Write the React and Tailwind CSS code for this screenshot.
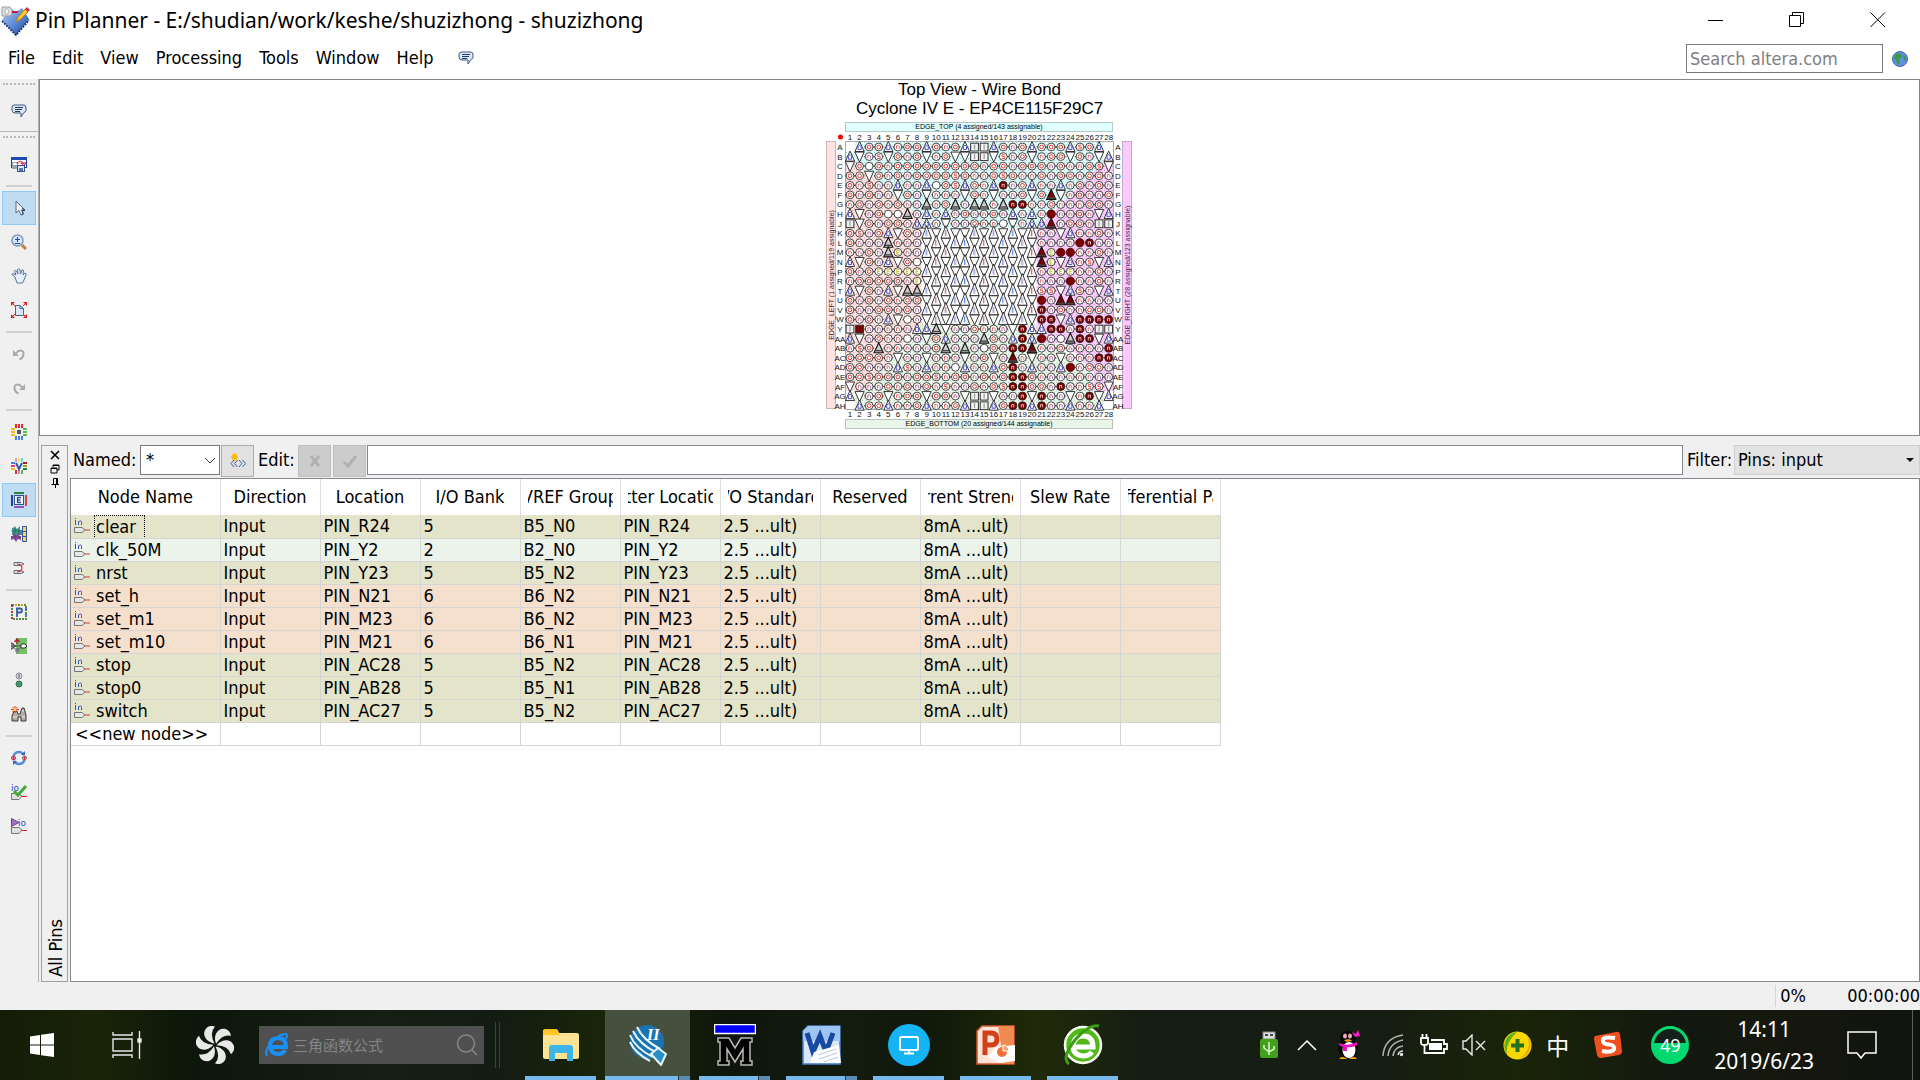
import React from "react";

const menuItems = ["File", "Edit", "View", "Processing", "Tools", "Window", "Help"];

const columns = [
  "Node Name",
  "Direction",
  "Location",
  "I/O Bank",
  "VREF Group",
  "Fitter Location",
  "I/O Standard",
  "Reserved",
  "Current Strength",
  "Slew Rate",
  "Differential Pair",
];

const pins = [
  { name: "clear", location: "PIN_R24", bank: "5", vref: "B5_N0" },
  { name: "clk_50M", location: "PIN_Y2", bank: "2", vref: "B2_N0" },
  { name: "nrst", location: "PIN_Y23", bank: "5", vref: "B5_N2" },
  { name: "set_h", location: "PIN_N21", bank: "6", vref: "B6_N2" },
  { name: "set_m1", location: "PIN_M23", bank: "6", vref: "B6_N2" },
  { name: "set_m10", location: "PIN_M21", bank: "6", vref: "B6_N1" },
  { name: "stop", location: "PIN_AC28", bank: "5", vref: "B5_N2" },
  { name: "stop0", location: "PIN_AB28", bank: "5", vref: "B5_N1" },
  { name: "switch", location: "PIN_AC27", bank: "5", vref: "B5_N2" },
];

const bankColors = {
  2: "bg-[#ebf3eb]",
  5: "bg-[#e4e4ca]",
  6: "bg-[#f5dfcd]",
};

// o/n/s/y: user I/O, d/B: assigned, ^/v: power and ground, A/D: clocks, #/S: config
const packageRows = [
  ["A", "-^oo ^noo ^ono ^##^ ono^ ooo^ so^-"],
  ["B", "^vns vono vnov v##v snov noov onv^"],
  ["C", "vo.o nooo oooo oono onoo onon nosv"],
  ["D", "oovo nono ooos onno sonn onoo noon"],
  ["E", "onsn n^nn ^.os ^on^ dno^ nn^n onon"],
  ["F", "onon nvon vnnn vonv nnov oDvn onno"],
  ["G", "nono nonn AnoA nAAn Addn nonn noon"],
  ["H", "^vno ..An ^n^n onno n^n^ nBnn onv^"],
  ["J", "#von oon^ ^nvn nonn .vn^ ^Dno on##"],
  ["K", "osno ^von ivil vivi vivi nnv^ nnon"],
  ["L", "onnn Annn vivi iviv iviv nnnn Bdnn"],
  ["M", "nnon Aynn iviv vivi vivi DyBB nnon"],
  ["N", "^von ^vo. vivi iviv iviv Dyv^ nsv^"],
  ["P", "onoy yyyy iviv vivi vivi nyyy nnon"],
  ["R", "nooo oony vivi iviv iviv nnnB nnon"],
  ["T", "^von ^vAA iviv vivi vivi ssv^ snv^"],
  ["U", "onon onoo vivi iviv iviv BnDD nnnn"],
  ["V", "onno onon iviv vivi vivi dnon noon"],
  ["W", "onon ^v.n vivi iviv iviv ddv^ dddd"],
  ["Y", "#Snn nnn^ ^Avn nonn nvd^ ^ddn dn##"],
  ["AA", "^vno nn.n vo^n nnAo n^d^ Bn.A ddv^"],
  ["AB", "nsoA nnnn noAn An.o nddD nnon nnnd"],
  ["AC", "oooo nvnn vnnn vnov nDnv nnvn nndd"],
  ["AD", "oonn n^sn ^nn. ^nn^ odn^ nn^B noon"],
  ["AE", "ooso oono osno onon oddo nnnn nnnn"],
  ["AF", "vnnn onon onsn nono sddo ondn nssv"],
  ["AG", "^vno vnoo voon v##v nndv dnnv ndv^"],
  ["AH", "-^oo ^nno ^nno ^##^ odd^ dnn^ nn^-"],
];

const PITCH = 9.58;
const LEFT = 24;
const TOP = 47;

const Pin = ({ kind, x, y }) => {
  const up = `M${x} ${y - 5.5}L${x + 4.6} ${y + 4.5}H${x - 4.6}Z`;
  const down = `M${x} ${y + 5.5}L${x + 4.6} ${y - 4.5}H${x - 4.6}Z`;
  switch (kind) {
    case "^":
      return (
        <g>
          <path d={up} fill="#fff" stroke="#222" strokeWidth="0.9" />
          <path d={`M${x - 1.6} ${y + 2.6}V${y - 0.4}L${x} ${y - 2}L${x + 1.6} ${y - 0.4}V${y + 2.6}Z`} fill="none" stroke="#3a3ae0" strokeWidth="0.9" />
        </g>
      );
    case "i":
      return (
        <g>
          <path d={`M${x} ${y - 7.5}L${x + 4.8} ${y + 5}H${x - 4.8}Z`} fill="#fff" stroke="#222" strokeWidth="0.9" />
          <path d={`M${x - 0.5} ${y - 3}V${y + 3}`} stroke="#5a8cf0" strokeWidth="1" />
          <path d={`M${x + 0.6} ${y - 3}V${y + 3}`} stroke="#f0a0a0" strokeWidth="0.6" />
        </g>
      );
    case "v":
    case "l":
      return <path d={down} fill="#fff" stroke="#222" strokeWidth="0.9" />;
    case "A":
      return (
        <g>
          <path d={up} fill="#ccc" stroke="#111" strokeWidth="1.1" />
          <path d={`M${x - 3.5} ${y + 2.5}H${x + 3.5}`} stroke="#444" strokeWidth="1.4" />
        </g>
      );
    case "D":
      return (
        <g>
          <path d={up} fill="#7d0000" stroke="#111" strokeWidth="1.1" />
          <path d={`M${x - 4} ${y + 3.2}H${x + 4}`} stroke="#444" strokeWidth="1.6" />
        </g>
      );
    case "#":
    case "S":
      return (
        <g>
          <rect x={x - 3.9} y={y - 3.8} width="7.8" height="7.8" fill={kind === "S" ? "#7d0000" : "#f2f2f2"} stroke="#333" strokeWidth="1" />
          <path d={`M${x} ${y - 2.5}V${y + 2.5}`} stroke={kind === "S" ? "#300" : "#999"} strokeWidth="1.2" />
        </g>
      );
    case "B":
      return <circle cx={x} cy={y} r="4.2" fill="#7d0000" stroke="#400" strokeWidth="0.8" />;
    case "d":
      return (
        <g>
          <circle cx={x} cy={y} r="4" fill="#7d0000" stroke="#222" strokeWidth="0.9" />
          <path d={`M${x - 1.2} ${y + 1.8}V${y - 1}H${x + 1}V${y + 1.8}`} fill="none" stroke="#f3c9c9" strokeWidth="0.9" />
        </g>
      );
    case "-":
      return null;
    default:
      return (
        <g>
          <path d={`M${x - 4.8} ${y}H${x + 4.8}`} stroke="#333" strokeWidth="1.2" />
          <circle cx={x} cy={y} r="3.9" fill="#fff" stroke="#333" strokeWidth="0.9" />
          {kind === "o" && <circle cx={x} cy={y} r="1.9" fill="none" stroke="#e23b30" strokeWidth="1" />}
          {kind === "n" && (
            <g fill="none" strokeWidth="0.9">
              <path d={`M${x - 1.3} ${y + 2}V${y - 1.2}H${x + 0.8}`} stroke="#e2554a" />
              <path d={`M${x + 1.4} ${y - 0.8}V${y + 2}`} stroke="#a06ad0" />
            </g>
          )}
          {kind === "s" && <path d={`M${x + 1.6} ${y - 1.8}H${x - 1.2}V${y}H${x + 1.4}V${y + 1.9}H${x - 1.6}`} fill="none" stroke="#e2453a" strokeWidth="0.9" />}
          {kind === "y" && <path d={`M${x + 1.4} ${y - 2}H${x - 1.2}V${y + 2}H${x + 1.4}M${x - 1} ${y}H${x + 1}`} fill="none" stroke="#c9c020" strokeWidth="0.9" />}
        </g>
      );
  }
};

const PackageView = () => {
  const at = (i) => i * PITCH;
  const poly = (points) => points.map(([c, r]) => `${19 + at(c)},${42 + at(r)}`).join(" ");
  const regions = [
    { id: "top", fill: "#e0fdfd", dot: "#b5d5d5", points: [[1, 0], [27, 0], [27, 2], [20, 9], [8, 9], [0, 2], [0, 1], [1, 1]] },
    { id: "left", fill: "#ffe3e3", dot: "#dfbcbc", points: [[0, 2], [1, 2], [8, 8], [8, 19], [7, 20], [2, 26], [0, 26]] },
    { id: "bottom", fill: "#eaf5ea", dot: "#bccdbc", points: [[2, 26], [8, 19], [20, 19], [27, 26], [27, 28], [1, 28], [1, 26]] },
    { id: "right", fill: "#fcccfc", dot: "#dda8dd", points: [[28, 2], [27, 2], [20, 9], [20, 21], [23, 21], [26, 24], [26, 26], [28, 26]] },
  ];

  return (
    <svg width="308" height="312" viewBox="0 0 308 312" role="img" aria-label="Package top view" className="font-['Liberation_Sans',sans-serif]">
      <defs>
        {regions.map((r) => (
          <pattern key={r.id} id={r.id} width="4" height="4" patternUnits="userSpaceOnUse">
            <rect width="4" height="4" fill={r.fill} />
            <rect width="1" height="1" fill={r.dot} />
            <rect x="2" y="2" width="1" height="1" fill={r.dot} />
          </pattern>
        ))}
      </defs>
      <rect x="19.500" y="1.500" width="267" height="9" fill="#e0ffff" stroke="#b4c8c8" />
      <rect x="19.500" y="298.500" width="267" height="9" fill="#eaf5ea" stroke="#b8c4b8" />
      <rect x="0.500" y="20.500" width="9" height="267" fill="#ffe3e3" stroke="#cbb5b5" />
      <rect x="296.500" y="20.500" width="9" height="267" fill="#fccafc" stroke="#c8a8c8" />
      <g transform="translate(0 -21)">
        {regions.map((r) => (
          <polygon key={r.id} points={poly(r.points)} fill={`url(#${r.id})`} />
        ))}
        <rect x="19.500" y="41.500" width="268" height="268" fill="none" stroke="#aaa" />
        {packageRows.map(([label, row], r) =>
          row.replaceAll(" ", "").split("").map((kind, c) => (
            <Pin key={label + c} kind={kind} x={LEFT + at(c)} y={TOP + at(r)} />
          ))
        )}
      </g>
      <circle cx="14.500" cy="16" r="2.500" fill="#f00" />
      <g fontSize="8" fill="#111" textAnchor="middle">
        {packageRows.map(([label], i) => (
          <React.Fragment key={label}>
            <text x={LEFT + at(i)} y="19">{i + 1}</text>
            <text x={LEFT + at(i)} y="296">{i + 1}</text>
            <text x="14" y={29 + at(i)}>{label}</text>
            <text x="292" y={29 + at(i)}>{label}</text>
          </React.Fragment>
        ))}
      </g>
      <g fontSize="7" fill="#000" textAnchor="middle">
        <text x="153" y="8">EDGE_TOP (4 assigned/143 assignable)</text>
        <text x="153" y="305">EDGE_BOTTOM (20 assigned/144 assignable)</text>
        <text transform="translate(8 154) rotate(-90)" fill="#422">EDGE_LEFT (1 assigned/119 assignable)</text>
        <text transform="translate(304 154) rotate(-90)" fill="#424">EDGE_RIGHT (28 assigned/123 assignable)</text>
      </g>
    </svg>
  );
};

const Icon = ({ children, size = 16, box = 16 }) => (
  <svg width={size} height={size} viewBox={`0 0 ${box} ${box}`} fill="none" className="shrink-0" aria-hidden="true">
    {children}
  </svg>
);

const Balloon = () => (
  <Icon>
    <path d="M3 2H13Q15 2 15 5V7Q15 9 13 9.500L10 14V10H4Q1 10 1 7V5Q1 2 3 2Z" fill="#dce8fa" stroke="#41597f" />
    <path d="M4 4.500H12M4 6.500H11M4 8.500H9" stroke="#223a5e" />
  </Icon>
);

// Ring of coloured pads shared by the pin-map tools
const Pads = ({ top, right, bottom, left }) => (
  <g>
    {[4, 7, 10].map((p, i) => (
      <React.Fragment key={p}>
        <rect x={p} y="0" width="2" height="4" fill={top[i]} />
        <rect x={p} y="12" width="2" height="4" fill={bottom[i]} />
        <rect x="0" y={p} width="4" height="2" fill={left[i]} />
        <rect x="12" y={p} width="4" height="2" fill={right[i]} />
      </React.Fragment>
    ))}
  </g>
);
const same = (c) => [c, c, c];

const tools = [
  {
    label: "Report window",
    icon: (
      <Icon>
        <rect x="0.500" y="1.500" width="15" height="10" fill="#fff" stroke="#1f3f9a" />
        <rect x="0" y="1" width="16" height="3" fill="#2148b0" />
        <rect x="1" y="6" width="6" height="7" fill="#9aa6b5" />
        <rect x="2" y="7" width="4" height="2" fill="#fff" />
        <path d="M6 8C7 4 12 5 12.500 8M10 7L12.500 10L15 7Z" stroke="#d01840" fill="#d01840" fillOpacity="0.2" />
        <rect x="6.500" y="9.500" width="7" height="6" fill="#dfe8f5" stroke="#2f4f8f" />
        <rect x="8" y="12" width="4" height="3" fill="#5577aa" />
      </Icon>
    ),
  },
  "sep",
  {
    label: "Selection",
    active: true,
    icon: (
      <Icon>
        <path d="M5 1V13L8 10.500L10 15L12 14L10.500 10H14Z" fill="#eef3fa" stroke="#5a6b82" />
        <path d="M11 8L14 10.500H11L12.500 14L10.500 15" stroke="#33415a" />
      </Icon>
    ),
  },
  {
    label: "Zoom",
    icon: (
      <Icon>
        <path d="M11 11L15 15" stroke="#c08040" strokeWidth="3" />
        <circle cx="6.500" cy="6.500" r="5.500" fill="#dcebff" stroke="#7d99bf" strokeWidth="1.500" />
        <path d="M4 5.500H9M6.500 3V8M4 9.500H9" stroke="#2448a8" strokeWidth="1.200" />
      </Icon>
    ),
  },
  {
    label: "Hand",
    icon: (
      <Icon>
        <path d="M4 9L1 6.500Q1 5 3 6L5 7L3.500 3Q4 1.500 5.500 3L7 6L6.500 1.500Q8 0 9 1.500L9.500 6L11 2Q12.500 1.500 12.500 3L12 7L14 5Q15.500 5 15 7L13 12L11.500 15H6Z" fill="#e8f0fc" stroke="#5d7599" />
      </Icon>
    ),
  },
  {
    label: "Fit in window",
    icon: (
      <Icon>
        <path d="M0 0H4L0 4ZM16 0V4L12 0ZM0 16V12L4 16ZM16 16H12L16 12Z" fill="#e02020" />
        <path d="M1 1L4 4M15 1L12 4M1 15L4 12M15 15L12 12" stroke="#e02020" />
        <path d="M4.500 3.500H9L12.500 6.500V13.500H4.500Z" fill="#dbe6f2" stroke="#4a6484" />
        <path d="M9 3.500V6.500H12.500" stroke="#4a6484" />
      </Icon>
    ),
  },
  "sep",
  {
    label: "Undo",
    icon: (
      <Icon>
        <path d="M5 7.500C8 3 13 4 12.500 8.500Q12 12 8.500 13.500" stroke="#a9a9a9" strokeWidth="2" />
        <path d="M2 4V10H8Z" fill="#a9a9a9" />
      </Icon>
    ),
  },
  {
    label: "Redo",
    icon: (
      <Icon>
        <path d="M11 7.500C8 3 3 4 3.500 8.500Q4 12 7.500 13.500" stroke="#a9a9a9" strokeWidth="2" />
        <path d="M14 4V10H8Z" fill="#a9a9a9" />
      </Icon>
    ),
  },
  "sep",
  {
    label: "Show I/O banks",
    icon: (
      <Icon>
        <Pads top={same("#e03030")} right={same("#58b848")} bottom={same("#4a80e0")} left={same("#f5b820")} />
        <rect x="6" y="6" width="4" height="4" fill="#555" />
      </Icon>
    ),
  },
  {
    label: "Show VREF groups",
    icon: (
      <Icon>
        <Pads top={["#c8a0e8", "#f0e060", "#60e0d0"]} right={["#a02020", "#a0a000", "#208040"]} bottom={["#e03030", "#b090e0", "#58b848"]} left={["#4a80e0", "#e04080", "#f5b820"]} />
        <path d="M5 5L8 11L11 5" stroke="#3058a8" strokeWidth="2" />
      </Icon>
    ),
  },
  {
    label: "Show edges",
    active: true,
    icon: (
      <Icon>
        <rect x="3" y="0" width="10" height="2" fill="#2e8040" />
        <rect x="3" y="14" width="10" height="2" fill="#9050c0" />
        <rect x="0" y="3" width="2" height="11" fill="#2040a0" />
        <rect x="14" y="3" width="2" height="11" fill="#e04040" />
        <rect x="3.500" y="3.500" width="9" height="9" fill="#f4f8ff" stroke="#305080" />
        <path d="M10 5.500H6.500V10.500H10M6.500 8H9.500" stroke="#304880" strokeWidth="1.300" />
      </Icon>
    ),
  },
  {
    label: "Show DQ/DQS pins",
    icon: (
      <Icon>
        <path d="M1 2L4 1L6 3L9 0V4H11V9H1Z" fill="#3a9a90" />
        <path d="M0 10H2V7L5 9L8 7V10H10V14L7 13L5 16L3 13L0 14Z" fill="#8a50a8" />
        <path d="M4 0V14M8 3V13M0 5H10M0 11H10" stroke="#333" strokeOpacity="0.400" />
        <path d="M11.500 0.500H15.500V5.500H11.500ZM11.500 5.500H15.500V10.500H11.500ZM11.500 10.500H15.500V15.500H11.500Z" fill="#ffd840" stroke="#3050a0" />
      </Icon>
    ),
  },
  {
    label: "Show differential pairs",
    icon: (
      <Icon>
        <path d="M3 2.500H10L13 4L10 5.500H3ZM3 10.500H10L13 12L10 13.500H3Z" fill="#d8dee6" stroke="#667280" />
        <path d="M6 4C9 4 11 6 11 8C11 10 9 12 6 12" stroke="#e03020" strokeWidth="1.200" />
      </Icon>
    ),
  },
  "sep",
  {
    label: "Pin legend",
    icon: (
      <Icon>
        <path d="M1 1H15V15H1Z" stroke="#4a9040" strokeWidth="2" strokeDasharray="2 1" />
        <path d="M1 15V1" stroke="#c03030" strokeWidth="2" strokeDasharray="2 4" />
        <path d="M4 1H15" stroke="#e0a020" strokeWidth="2" strokeDasharray="2 4" />
        <path d="M15 4V15" stroke="#5070d0" strokeWidth="2" strokeDasharray="2 4" />
        <path d="M6 13V4.500H9Q11 4.500 11 6.500Q11 8.500 9 8.500H6" stroke="#3058a8" strokeWidth="1.800" />
      </Icon>
    ),
  },
  {
    label: "Pad view",
    icon: (
      <Icon>
        <rect x="5" width="11" height="16" fill="#77c06a" />
        <path d="M0 4V12M0 5L5 8L0 11M2 5V11M0 8H10" stroke="#444" />
        <path d="M10 6H14L16 8L14 10H10Z" fill="#fff" stroke="#333" />
        <path d="M3.500 4L6 1L8.500 4M6 1V6" stroke="#b01830" strokeWidth="1.300" />
        <path d="M3 11H9M4 13H8M5.500 15H6.500" stroke="#8040a0" />
      </Icon>
    ),
  },
  {
    label: "Resources",
    icon: (
      <Icon>
        <circle cx="8" cy="4" r="3" fill="#d8d8e0" stroke="#8a8a92" />
        <path d="M8 2V6" stroke="#555" />
        <circle cx="8" cy="12" r="3" fill="#59b060" stroke="#287038" />
        <circle cx="8" cy="12" r="1.200" fill="#d8f0e8" stroke="#205090" />
      </Icon>
    ),
  },
  {
    label: "Node finder",
    icon: (
      <Icon>
        <path d="M3 5H6L7 8H9L11 2H13L15 9V15H10V11H7V15H1V10Z" fill="#b0aca6" stroke="#3d3a38" />
        <path d="M11 5H13M2 11H6M11 11H14" stroke="#eee" />
        <path d="M4 0V7M0 3.500H8M1.500 1L6.500 6M6.500 1L1.500 6" stroke="#f03020" />
        <circle cx="4" cy="3.500" r="1.500" fill="#ffd840" />
      </Icon>
    ),
  },
  "sep",
  {
    label: "Live I/O check",
    icon: (
      <Icon>
        <path d="M2.500 6Q4 2 8 2Q11 2 13 5" stroke="#5a8ad8" strokeWidth="2.500" />
        <path d="M13.500 10Q12 14 8 14Q5 14 3 11" stroke="#5a8ad8" strokeWidth="2.500" />
        <path d="M10 5H14V1ZM6 11H2V15Z" fill="#3a68b8" />
        <circle cx="2.500" cy="8" r="2" fill="#fff" stroke="#d02850" />
        <circle cx="13.500" cy="8" r="2" fill="#fff" stroke="#38a048" />
        <path d="M0 8H5M11 8H16M2.500 6V10M13.500 6V10" stroke="#d02850" />
      </Icon>
    ),
  },
  {
    label: "Run I/O assignment analysis",
    icon: (
      <Icon>
        <text x="0" y="7" fontSize="9" fill="#2848c0" fontFamily="DejaVu Sans">io</text>
        <path d="M0.500 9.500H8L11 12L8 15.500H0.500Z" fill="#e0e0e0" stroke="#777" />
        <path d="M11 12.500H16" stroke="#e02020" />
        <path d="M3 7L7 11L15 2" stroke="#48a838" strokeWidth="3" />
      </Icon>
    ),
  },
  {
    label: "I/O analysis",
    icon: (
      <Icon>
        <path d="M0.500 0.500V8.500L8 4.500Z" fill="#a070c0" stroke="#6a4888" />
        <text x="7" y="8" fontSize="9" fill="#2848c0" fontFamily="DejaVu Sans">io</text>
        <path d="M0.500 9.500H8L11 12L8 15.500H0.500Z" fill="#e0e0e0" stroke="#777" />
        <path d="M11 12.500H16" stroke="#e02020" />
      </Icon>
    ),
  },
];

const Grip = () => <div className="h-1 w-8 self-center border-t-2 border-dotted border-[#b8b8b8]" />;

const Toolbar = () => (
  <aside className="flex w-[39px] shrink-0 flex-col border-r border-[#b0b0b0] bg-[#f0f0f0] pt-1">
    <Grip />
    <button aria-label="Messages" className="flex h-11 items-center justify-center pt-1">
      <Balloon />
    </button>
    <div className="mb-1 h-px bg-[#b8b8b8]" />
    <Grip />
    <div className="flex flex-col px-[2px] pt-[7px]">
      {tools.map((tool, i) =>
        tool === "sep" ? (
          <div key={i} className="mx-1 my-1 h-[2px] bg-[#d0d0d0]" />
        ) : (
          <button
            key={i}
            aria-label={tool.label}
            className={`flex h-[34px] items-center justify-center border ${
              tool.active ? "border-[#90c8f6] bg-[#c0dcf3]" : "border-transparent"
            }`}
          >
            {tool.icon}
          </button>
        )
      )}
    </div>
  </aside>
);

const InputPinIcon = () => (
  <Icon>
    <path d="M1.500 2V7M4.500 7V3.500M4.500 4.500Q5 3 6.500 3Q7.500 3 7.500 4.500V7" stroke="#3355c0" />
    <path d="M1 0.500H2" stroke="#3355c0" />
    <path d="M0.500 9.500H8L11 12L8 14.500H0.500Z" fill="#e6e6e6" stroke="#777" />
    <path d="M11 12H16" stroke="#e03030" />
  </Icon>
);

const PinTable = () => (
  <table className="w-[1149px] table-fixed border-collapse">
    <colgroup>
      <col className="w-[149px]" />
      {columns.slice(1).map((c) => (
        <col key={c} className="w-[100px]" />
      ))}
    </colgroup>
    <thead>
      <tr>
        {columns.map((c) => (
          <th key={c} className="h-[36px] border-r border-[#e0e0e0] px-[7px] py-0 font-normal">
            <div className="flex justify-center overflow-hidden whitespace-nowrap">
              <span>{c}</span>
            </div>
          </th>
        ))}
      </tr>
    </thead>
    <tbody className="leading-[22px]">
      {pins.map((p) => (
        <tr key={p.name} className={bankColors[p.bank]}>
          <td className="h-[23px] border-r border-b border-[#d5d5d5] p-0">
            <div className="flex items-center gap-1 pl-[3px]">
              <InputPinIcon />
              <span className={p.name === "clear" ? "border border-b-0 border-dotted border-black pr-2 pl-px leading-[21px]" : "pl-[2px]"}>{p.name}</span>
            </div>
          </td>
          {["Input", p.location, p.bank, p.vref, p.location, "2.5 ...ult)", "", "8mA ...ult)", "", ""].map((value, i) => (
            <td key={i} className="border-r border-b border-[#d5d5d5] py-0 pr-0 pl-[3px] whitespace-nowrap">{value}</td>
          ))}
        </tr>
      ))}
      <tr>
        <td className="h-[23px] border-r border-b border-[#d5d5d5] py-0 pr-0 pl-1 whitespace-nowrap">&lt;&lt;new node&gt;&gt;</td>
        {columns.slice(1).map((c) => (
          <td key={c} className="border-r border-b border-[#d5d5d5] p-0" />
        ))}
      </tr>
    </tbody>
  </table>
);

const FilterBar = () => (
  <div className="flex h-[33px] items-start pl-[2px]">
    <label htmlFor="named" className="w-[68px] pt-1 pl-px whitespace-nowrap">Named:</label>
    <div className="relative h-[30px] w-20">
      <select id="named" className="h-full w-full appearance-none border border-[#7a7a7a] bg-white px-[5px]">
        <option>*</option>
      </select>
      <svg className="pointer-events-none absolute top-3 right-1" width="12" height="8" viewBox="0 0 12 8" fill="none">
        <path d="M1 1L6 6L11 1" stroke="#444" />
      </svg>
    </div>
    <button aria-label="Wildcards" className="ml-px flex h-8 w-[33px] items-center justify-center border border-[#adadad] bg-[#e1e1e1]">
      <Icon>
        <path d="M4.500 0V8M1 4H8M2 1.500L7 6.500M7 1.500L2 6.500" stroke="#f5b800" strokeWidth="1.300" />
        <path d="M4 7L1 10.500L4 14M7.500 7L4.500 10.500L7.500 14M9 7L12 10.500L9 14M12.500 7L15.500 10.500L12.500 14" stroke="#3d5f9a" />
      </Icon>
    </button>
    <label htmlFor="edit" className="w-[44px] pt-1 pl-1">Edit:</label>
    <button aria-label="Cancel" disabled className="flex h-8 w-[33px] items-center justify-center border border-[#bfbfbf] bg-[#cccccc]">
      <Icon><path d="M4 3L12 13M12 3L4 13" stroke="#b0b0b0" strokeWidth="3" /></Icon>
    </button>
    <button aria-label="Accept" disabled className="ml-[2px] flex h-8 w-[33px] items-center justify-center border border-[#bfbfbf] bg-[#cccccc]">
      <Icon><path d="M2 9L6 13L14 3" stroke="#b0b0b0" strokeWidth="3" /></Icon>
    </button>
    <input id="edit" className="ml-px h-[30px] min-w-0 flex-1 border border-[#828790] bg-white px-1" />
    <label htmlFor="filter" className="w-[51px] pt-1 pl-1">Filter:</label>
    <div className="relative h-[30px] w-[186px]">
      <select id="filter" defaultValue="input" className="h-full w-full appearance-none border border-[#cfcfcf] bg-[#e3e3e3] px-[3px]">
        <option value="input">Pins: input</option>
        <option value="all">Pins: all</option>
      </select>
      <svg className="pointer-events-none absolute top-[13px] right-1.5" width="8" height="4" viewBox="0 0 8 4">
        <path d="M0 0H8L4 4Z" fill="#111" />
      </svg>
    </div>
  </div>
);

const DockStrip = () => (
  <div className="mr-[2px] flex w-[27px] shrink-0 flex-col items-center justify-between border border-[#a0a0a0] py-1">
    <div className="flex flex-col items-center gap-1">
      <button aria-label="Close panel"><Icon size={10} box={10}><path d="M1 1L9 9M9 1L1 9" stroke="#000" strokeWidth="1.600" /></Icon></button>
      <button aria-label="Float panel"><Icon size={10} box={10}><path d="M3 3V1H9V6H7M1 4H7V9H1ZM1 4.500H7M3 1.500H9" stroke="#000" /></Icon></button>
      <button aria-label="Pin panel"><Icon size={10} box={10}><path d="M3.500 0.500H7.500V6.500H3.500ZM1.500 6.500H9M5.500 6.500V10M6.500 1V6" stroke="#000" /></Icon></button>
    </div>
    <span className="self-end rotate-180 [writing-mode:vertical-rl]">All Pins</span>
  </div>
);

const TitleBar = () => (
  <header className="flex h-10 items-center justify-between pr-[18px] font-['Noto_Sans','Open_Sans',sans-serif] text-[21px]">
    <div className="flex items-center gap-[5px]">
      <svg width="30" height="32" viewBox="0 0 30 32">
        <defs>
          <linearGradient id="gem" x1="0" y1="0" x2="1" y2="1">
            <stop offset="0" stopColor="#b4cdf5" />
            <stop offset="0.600" stopColor="#4f7fd0" />
            <stop offset="1" stopColor="#183a80" />
          </linearGradient>
        </defs>
        <path d="M2 16L10 4L16 8L22 4L29 15L16 31Z" fill="url(#gem)" />
        <path d="M2 17L16 31L29 16" fill="none" stroke="#1a3470" strokeWidth="2" strokeDasharray="2 1" />
        <path d="M2 3H8Q12 3 12 7.500Q12 12 8 12H2Z" fill="#e4e4e4" stroke="#999" />
        <path d="M5 5V10H7Q9 10 9 7.500Q9 5 7 5Z" fill="#fff" stroke="#aaa" />
        <path d="M12 8H18" stroke="#c02030" strokeWidth="2" />
        <path d="M16 18L18 13L25 5L28 8L21 15Z" fill="#ffc830" stroke="#b87a10" />
        <path d="M25 5L27 3L30 6L28 8Z" fill="#d82850" />
      </svg>
      <h1>Pin Planner - E:/shudian/work/keshe/shuzizhong - shuzizhong</h1>
    </div>
    <div className="flex gap-[33px]">
      <button aria-label="Minimize" className="flex w-12 justify-center"><Icon><path d="M0 8.500H15" stroke="#000" /></Icon></button>
      <button aria-label="Restore" className="flex w-12 justify-center"><Icon><path d="M0.500 3.500H11.500V14.500H0.500ZM3.500 3V0.500H14.500V11.500H12" stroke="#000" /></Icon></button>
      <button aria-label="Close" className="flex w-12 justify-center"><Icon><path d="M0.500 0.500L15 15M15 0.500L0.500 15" stroke="#000" /></Icon></button>
    </div>
  </header>
);

const MenuBar = () => (
  <nav className="flex h-[39px] items-center justify-between pr-3 pb-[2px] pl-2">
    <div className="flex items-center gap-[17px] pb-[2px]">
      {menuItems.map((item) => (
        <button key={item}>{item}</button>
      ))}
      <button aria-label="Feedback" className="ml-2"><Balloon /></button>
    </div>
    <div className="flex items-center gap-[9px]">
      <input aria-label="Search altera.com" placeholder="Search altera.com" className="h-[29px] w-[197px] border border-[#7a7a7a] px-[3px] placeholder:text-[#808080]" />
      <button aria-label="Search">
        <Icon>
          <circle cx="8" cy="8" r="7.500" fill="#5f8fe0" stroke="#4068b0" />
          <path d="M3 4Q6 1 9 3L10 6L7 8L8 12L6 14Q4 11 4 9L2 7ZM11 4L14 6V9L12 10Z" fill="#3d9a48" />
        </Icon>
      </button>
    </div>
  </nav>
);

const apps = [
  {
    name: "File Explorer",
    icon: (
      <svg width="38" height="34" viewBox="0 0 38 34">
        <path d="M1 3Q1 1 3 1H15L18 6H1Z" fill="#f7b916" />
        <path d="M1 5H35Q37 5 37 7V29Q37 31 35 31H3Q1 31 1 29Z" fill="#ffe394" />
        <path d="M1 2H15L18 7H1Z" fill="#ffc72a" />
        <path d="M7 33V20Q7 17 10 17H28Q31 17 31 20V33H25V25H13V33Z" fill="#3db4e8" />
      </svg>
    ),
  },
  {
    name: "Quartus II",
    active: true,
    stacked: true,
    icon: (
      <svg width="42" height="42" viewBox="0 0 42 42" fill="none">
        <circle cx="20" cy="18" r="17" fill="#1b74b0" />
        <path d="M3 11Q8 24 26 33M6 7Q12 20 30 29M10 3Q16 16 33 25M3 18Q8 29 23 37" stroke="#e8f4fc" strokeWidth="2" />
        <path d="M24 30L31 24L39 30L34 41Z" fill="#2890c8" stroke="#eaf4fa" strokeWidth="2" />
        <text x="20" y="16" fontSize="16" fontStyle="italic" fontWeight="bold" fill="#fff" fontFamily="Liberation Serif">II</text>
      </svg>
    ),
  },
  {
    name: "ModelSim",
    stacked: true,
    icon: (
      <svg width="42" height="42" viewBox="0 0 42 42">
        <rect x="0.500" y="0.500" width="41" height="9" fill="#0000f8" stroke="#fff" strokeWidth="1.500" />
        <path d="M4 14H15L21 24L27 14H38V18H36V37H38V41H27V37H29V25L21 38L13 25V37H15V41H4V37H6V18H4Z" fill="#000" stroke="#b8b8b8" strokeWidth="1.500" />
      </svg>
    ),
  },
  {
    name: "Word",
    stacked: true,
    icon: (
      <svg width="40" height="40" viewBox="0 0 40 40" fill="none">
        <path d="M6 1H38V39H1V6Z" fill="#d8e8fa" stroke="#4a7cc8" strokeWidth="1.500" />
        <path d="M6 1H38V16H1V6Z" fill="#9ec4f0" />
        <path d="M5 8L11 27L18 11L24 27L31 8" stroke="#1848a0" strokeWidth="5" />
        <path d="M12 27L37 20L39 38H8Z" fill="#fff" />
        <path d="M16 30L34 24M17 34L35 28M22 37L36 32" stroke="#b8c8e0" />
      </svg>
    ),
  },
  {
    name: "Desktop",
    icon: (
      <svg width="42" height="42" viewBox="0 0 42 42" fill="none">
        <circle cx="21" cy="21" r="21" fill="#14b4f5" />
        <rect x="12" y="13" width="18" height="13" rx="1.500" stroke="#fff" strokeWidth="2" />
        <path d="M16 29.500H26M21 26V29" stroke="#fff" strokeWidth="2" />
      </svg>
    ),
  },
  {
    name: "PowerPoint",
    icon: (
      <svg width="40" height="40" viewBox="0 0 40 40" fill="none">
        <path d="M6 1H38V39H1V6Z" fill="#fbe3d8" stroke="#d8552a" strokeWidth="1.500" />
        <path d="M22 1H38V39H28Z" fill="#f08a50" />
        <path d="M9 30V8H15Q21 8 21 14Q21 20 15 20H9" stroke="#d24018" strokeWidth="5" />
        <path d="M20 22L39 20V36L24 38L12 32Z" fill="#fff" />
        <circle cx="26" cy="27" r="5" fill="#f07038" />
        <path d="M27 26V20A6 6 0 0 1 33 26Z" fill="#f8a070" stroke="#fff" />
      </svg>
    ),
  },
  {
    name: "Browser",
    icon: (
      <svg width="40" height="42" viewBox="0 0 40 42" fill="none">
        <circle cx="20" cy="21" r="18" fill="#52b81a" stroke="#f4fff0" strokeWidth="2.500" />
        <path d="M10 23H30Q30 12 20 12Q11 12 10 22Q10 31 20 32Q26 32 29 28" stroke="#fff" strokeWidth="5" />
        <path d="M6 40Q-2 34 12 16Q26 0 36 2" stroke="#3c9c14" strokeWidth="3" />
      </svg>
    ),
  },
];

const TrayIcons = () => (
  <div className="flex items-center">
    <button aria-label="USB" className="mr-[18px]">
      <svg width="20" height="28" viewBox="0 0 20 28" fill="none">
        <rect x="4" y="1" width="12" height="7" fill="#ddd" stroke="#888" />
        <path d="M6 4H9M11 4H14" stroke="#444" strokeWidth="2" />
        <rect x="1" y="8" width="18" height="19" rx="2" fill="#44a01c" />
        <path d="M10 11V24M10 21L5 17V14M10 21L15 18V15" stroke="#d8f8c8" strokeWidth="1.500" />
      </svg>
    </button>
    <button aria-label="Show hidden icons" className="mr-5">
      <svg width="20" height="12" viewBox="0 0 20 12" fill="none"><path d="M1 11L10 2L19 11" stroke="#fff" strokeWidth="1.500" /></svg>
    </button>
    <button aria-label="QQ" className="mr-5">
      <svg width="24" height="30" viewBox="0 0 24 30">
        <ellipse cx="11" cy="18" rx="10" ry="10" fill="#080808" />
        <ellipse cx="11" cy="8" rx="8" ry="7" fill="#080808" />
        <ellipse cx="12" cy="20" rx="6.500" ry="8" fill="#fff" />
        <ellipse cx="8" cy="6" rx="2" ry="2.500" fill="#eab" /><ellipse cx="13" cy="6" rx="2" ry="2.500" fill="#eab" />
        <path d="M7 10.500Q11 8 15 10.500Q11 13 7 10.500Z" fill="#f5a800" />
        <path d="M2 13Q11 17 20 12V15Q15 18 10 17V21H6V17L2 15Z" fill="#f010c0" />
        <path d="M15 2L19 4L21 0L23 6L18 7Z" fill="#ff20c8" />
        <path d="M2 29Q5 25 10 29ZM12 29Q17 25 20 29Z" fill="#f5a800" />
      </svg>
    </button>
    <button aria-label="Network" className="mr-[14px]">
      <svg width="24" height="24" viewBox="0 0 24 24" fill="none" stroke="#e0e0e0" strokeWidth="1.500">
        <path d="M2 23Q3 5 22 2M7 23Q8 10 22 7M12 23Q13 14 22 13" stroke="#b0b0b0" />
        <path d="M17 22Q18 18 22 18" /><circle cx="20.500" cy="21.500" r="1" fill="#fff" />
      </svg>
    </button>
    <button aria-label="Battery" className="mr-[14px]">
      <svg width="29" height="22" viewBox="0 0 29 22" fill="none" stroke="#fff" strokeWidth="1.800">
        <path d="M2 4H9V9Q9 11 5.500 11Q2 11 2 9ZM3.500 0V4M7.500 0V4M5.500 11V19H25V15H28V10H25V6H12" />
        <rect x="10" y="9" width="13" height="7" fill="#fff" stroke="none" />
      </svg>
    </button>
    <button aria-label="Volume" className="mr-[17px]">
      <svg width="24" height="22" viewBox="0 0 24 22" fill="none" stroke="#e8e8e8" strokeWidth="1.400">
        <path d="M1 7H4L10 1V21L4 15H1ZM14 7L23 16M23 7L14 16" />
      </svg>
    </button>
    <button aria-label="Security" className="mr-[14px]">
      <svg width="29" height="29" viewBox="0 0 29 29" fill="none">
        <circle cx="14.500" cy="14.500" r="14" fill="#f8d800" />
        <path d="M14 1A14 14 0 0 0 4 23Q2 12 14 1Z" fill="#59b020" />
        <path d="M14.500 8V21M8 14.500H21" stroke="#207020" strokeWidth="4" />
        <path d="M24 5A14 14 0 0 1 16 28Q30 18 24 5Z" fill="#f0a800" />
      </svg>
    </button>
    <button className="mr-6 text-[23px] leading-6 font-['Noto_Sans_CJK_SC',sans-serif]">中</button>
    <button aria-label="Sogou input" className="mr-7">
      <svg width="30" height="28" viewBox="0 0 30 28" fill="none">
        <path d="M2 5L23 1Q26 0 27 3L29 20Q29 23 26 24L8 27Q5 27 4 24L1 8Q1 6 2 5Z" fill="#f05020" />
        <path d="M22 7Q9 5 10 10Q10 13 16 13.500Q22 14 21 18Q19 22 9 20" stroke="#fff" strokeWidth="4" />
      </svg>
    </button>
    <button className="mr-[25px] flex h-[38px] w-[38px] items-center justify-center rounded-full border-[3px] border-[#00d870] bg-linear-to-b from-[#14211a] from-45% to-[#00d870] to-45% text-[18px]">49</button>
  </div>
);

const Taskbar = () => (
  <footer className="flex h-[70px] items-center justify-between bg-[linear-gradient(90deg,#141c08_0%,#1a2408_5%,#0c160a_10%,#161f14_20%,#131c12_26%,#1a2608_32%,#0e160c_38%,#141c10_44%,#0f180a_48%,#202a08_54%,#151c14_60%,#161d12_72%,#1a2408_79%,#12180f_88%,#16180e_92%,#10140f_100%)] font-['Noto_Sans','Open_Sans',sans-serif] text-white">
    <div className="flex h-full items-center">
      <button aria-label="Start" className="ml-[30px]">
        <svg width="24" height="24" viewBox="0 0 24 24" fill="#fff"><path d="M0 3.500L10 2V11.500H0ZM11 1.800L24 0V11.500H11ZM0 12.500H10V22L0 20.500ZM11 12.500H24V24L11 22.200Z" /></svg>
      </button>
      <button aria-label="Task view" className="ml-[58px]">
        <svg width="30" height="28" viewBox="0 0 30 28" fill="none" stroke="#e8e8e8" strokeWidth="1.400">
          <path d="M1 1V4H20V1M1 27V24H20V27M1 8H20V20H1ZM27.500 0V28" /><rect x="26" y="8" width="3" height="3" fill="#fff" />
        </svg>
      </button>
      <button aria-label="Assistant" className="ml-[54px]">
        <svg width="38" height="38" viewBox="0 0 38 38" fill="#e8e8e8">
          {[0, 60, 120, 180, 240, 300].map((angle) => (
            <path key={angle} d="M18.500 17.500C9 16 5 7 11 1.500Q14 -1 19 0.500Q13 7 18.500 17.500Z" transform={`rotate(${angle} 19 19)`} />
          ))}
        </svg>
      </button>
      <div className="ml-[25px] flex h-[38px] w-[225px] items-center bg-[#505050] px-[6px]">
        <svg width="24" height="26" viewBox="0 0 24 26" fill="none">
          <path d="M5 15H21Q21 6 13 6Q5 6 5 14Q6 22 13 22Q18 22 20 18" stroke="#1890f8" strokeWidth="4" />
          <path d="M2 24Q-1 18 8 9Q16 1 21 2Q23 3 21 7" stroke="#1890f8" strokeWidth="2" />
        </svg>
        <input aria-label="Search" placeholder="三角函数公式" className="ml-1 min-w-0 flex-1 font-['Noto_Sans_CJK_SC',sans-serif] text-[15px] placeholder:text-[#858585]" />
        <svg width="22" height="22" viewBox="0 0 22 22" fill="none" stroke="#8a8a8a" strokeWidth="1.400"><circle cx="10" cy="9.500" r="8.500" /><path d="M16 16L21 21" /></svg>
      </div>
      <div className="mr-[17px] ml-[11px] h-[46px] w-[5px] border-x border-[#3c4436]" />
      <div className="flex h-full">
        {apps.map((app) => (
          <button key={app.name} aria-label={app.name} className="flex h-full w-[87px]">
            <span className={`mx-auto flex h-full flex-col items-center justify-between ${app.active ? "w-[85px] bg-[#46503f]" : "w-[71px]"}`}>
              <span className="flex flex-1 items-center pt-1">{app.icon}</span>
              <span className="flex h-1 w-full">
                <span className="flex-1 bg-[#76b9ed]" />
                {app.stacked && <span className="w-3 border-l border-[#24333c] bg-[#5a8db5]" />}
              </span>
            </span>
          </button>
        ))}
      </div>
    </div>
    <div className="flex h-full items-center">
      <TrayIcons />
      <time className="text-center text-[21px] leading-8">
        14:11
        <br />
        2019/6/23
      </time>
      <button aria-label="Notifications" className="mr-[35px] ml-[33px]">
        <svg width="30" height="30" viewBox="0 0 30 30" fill="none" stroke="#fff" strokeWidth="1.500"><path d="M1 2H29V23H18L14 28L10 23H1Z" /></svg>
      </button>
      <div className="h-full w-2 border-l border-[#5a5f58]" />
    </div>
  </footer>
);

const App = () => (
  <div className="flex min-h-screen flex-col bg-white font-['DejaVu_Sans_Condensed','DejaVu_Sans',sans-serif] text-[18px] leading-[22px] text-black">
    <TitleBar />
    <MenuBar />
    <main className="flex flex-1 bg-[#f0f0f0]">
      <Toolbar />
      <div className="flex min-w-0 flex-1 flex-col">
        {/* Package view */}
        <section className="flex h-[357px] flex-col items-center border border-[#828790] bg-white">
          <p className="text-center font-['Liberation_Sans',sans-serif] text-[17px] leading-[19px]">
            Top View - Wire Bond
            <br />
            Cyclone IV E - EP4CE115F29C7
          </p>
          <div className="pt-[3px]">
            <PackageView />
          </div>
        </section>

        {/* All Pins dock */}
        <section className="mt-[9px] flex flex-1 pl-[2px]">
          <DockStrip />
          <div className="flex min-w-0 flex-1 flex-col">
            <FilterBar />
            <div className="flex-1 border border-[#828790] bg-white">
              <PinTable />
            </div>
          </div>
        </section>
      </div>
    </main>
    <div className="flex h-7 items-center justify-end bg-[#f0f0f0]">
      <span className="w-[72px] border-l border-[#d5d5d5] pl-1">0%</span>
      <span>00:00:00</span>
    </div>
    <Taskbar />
  </div>
);

export default App;
